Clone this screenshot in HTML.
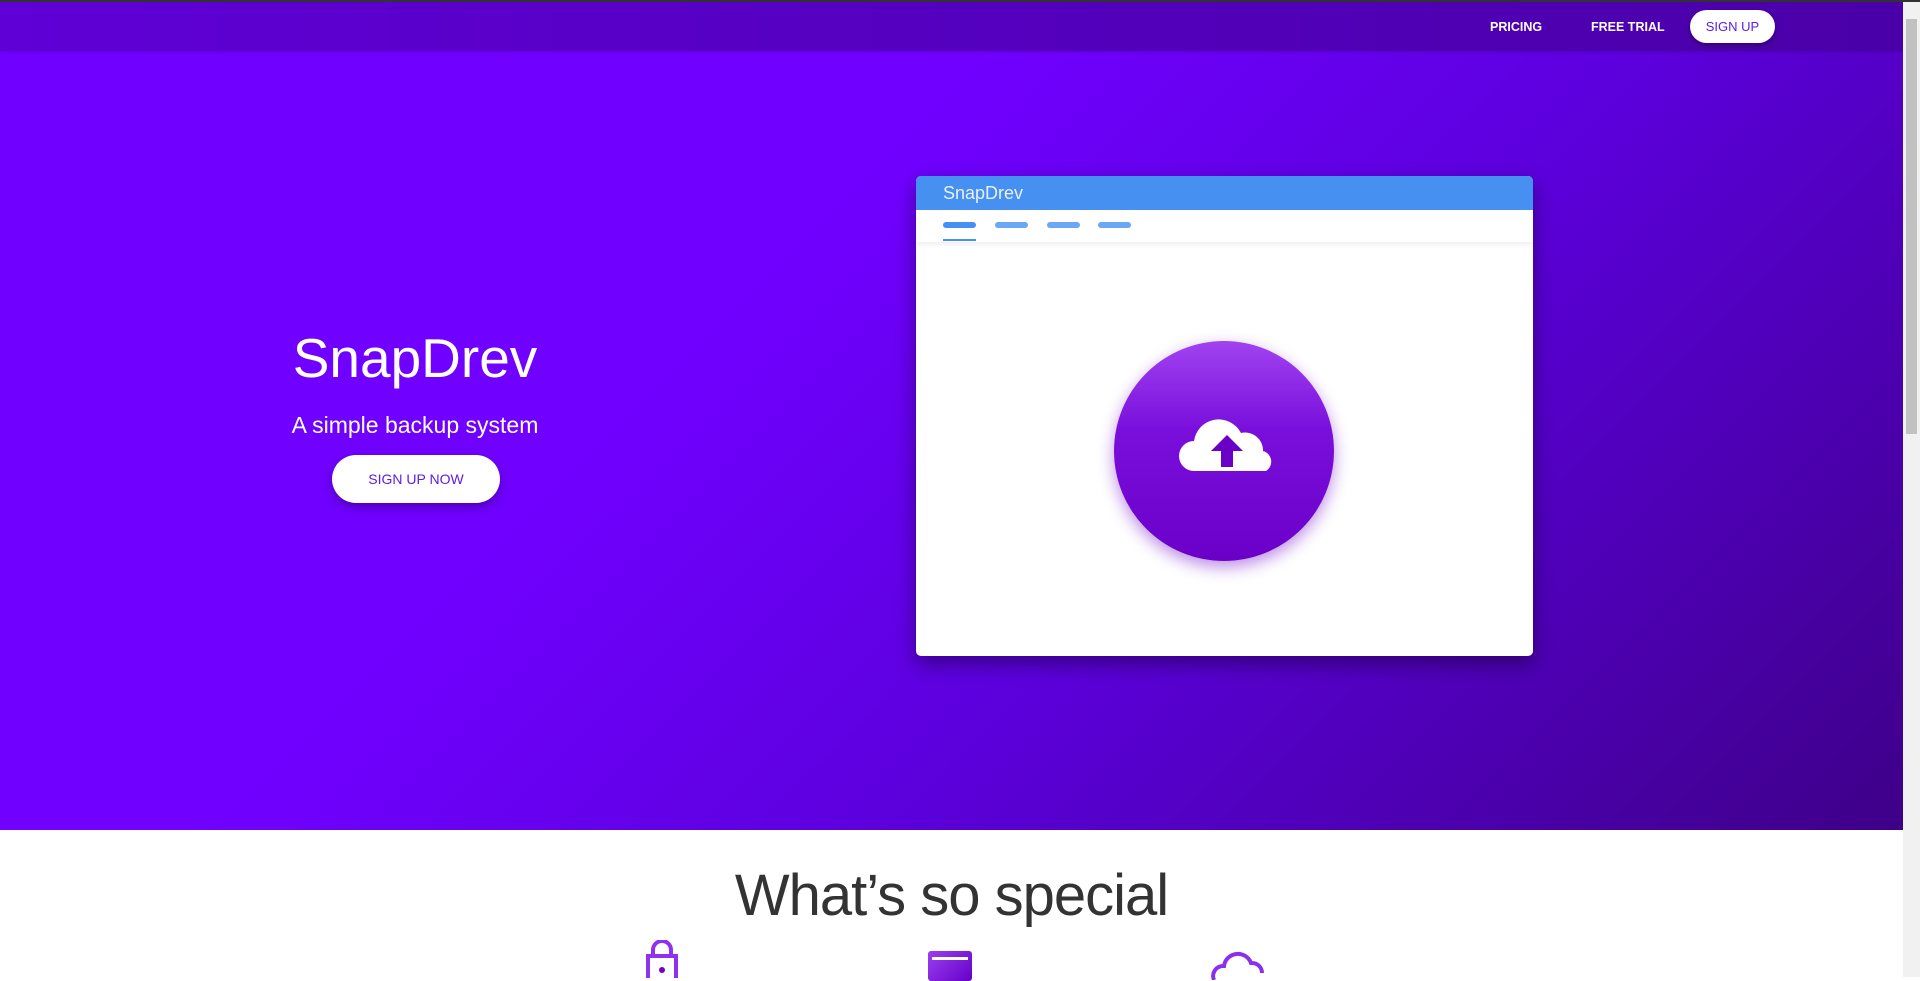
<!DOCTYPE html>
<html><head><style>
*{margin:0;padding:0;box-sizing:border-box}
body{width:1920px;height:977px;overflow:hidden;font-family:"Liberation Sans",sans-serif;background:#fff;position:relative}
.hero{position:absolute;left:0;top:0;width:1903px;height:830px;background:linear-gradient(135deg,#7000ff 0%,#7000ff 38%,#5c00dd 62%,#3e0088 100%)}
.topline{position:absolute;left:0;top:0;width:1920px;height:2px;background:#333}
.nav{position:absolute;left:0;top:2px;width:1903px;height:49px;background:linear-gradient(90deg,#5f00d6,#4a00a8);box-shadow:0 1px 3px rgba(0,0,0,.15)}
.nav a{position:absolute;top:18px;color:#fff;font-weight:bold;font-size:12.5px}
.su{position:absolute;left:1690px;top:10px;width:85px;height:33px;border-radius:17px;background:#fff;color:#5a1ee6;font-size:13px;text-align:center;line-height:33px;box-shadow:0 3px 6px rgba(0,0,0,.3)}
.title{position:absolute;left:215px;width:400px;text-align:center;top:326px;color:#fff;font-size:55px;font-weight:300}
.sub{position:absolute;left:215px;width:400px;text-align:center;top:412px;color:#fff;font-size:23px}
.btn{position:absolute;left:332px;top:455px;width:168px;height:48px;border-radius:24px;background:#fff;color:#5a1ee6;font-size:14px;text-align:center;line-height:48px;box-shadow:0 4px 10px rgba(0,0,0,.3)}
.card{position:absolute;left:916px;top:176px;width:617px;height:480px;background:#fff;border-radius:5px;overflow:hidden;box-shadow:0 8px 20px rgba(0,0,0,.4)}
.ch{height:34px;background:#4590f0;color:#e8f0ff;font-size:18px;font-weight:300;padding:7px 0 0 27px}
.tabs{height:32px;position:relative;box-shadow:0 3px 4px rgba(0,0,0,.06)}
.tabs i{position:absolute;top:12px;width:33px;height:6px;border-radius:3px;background:#6aa8f5}
.circ{position:absolute;left:198px;top:165px;width:220px;height:220px;border-radius:50%;background:linear-gradient(180deg,#a043f0 0%,#7a0fdc 40%,#6a00c8 100%);box-shadow:0 6px 16px rgba(106,0,200,.45)}
.sb{position:absolute;left:1903px;top:2px;width:17px;height:975px;background:#f1f1f1}
.sb div{position:absolute;left:3px;top:17px;width:11px;height:415px;background:#c1c1c1}
h2{position:absolute;left:0;width:1903px;text-align:center;top:862px;font-size:58px;font-weight:300;color:#333;letter-spacing:-1px}
</style></head><body>
<div class="hero"></div>
<div class="topline"></div>
<div class="nav">
<a style="left:1490px">PRICING</a><a style="left:1591px">FREE TRIAL</a>
<div class="su" style="top:8px">SIGN UP</div>
</div>
<div class="title">SnapDrev</div>
<div class="sub">A simple backup system</div>
<div class="btn">SIGN UP NOW</div>
<div class="card">
<div class="ch">SnapDrev</div>
<div class="tabs"><i style="left:27px;background:#4590f0"></i><i style="left:79px"></i><i style="left:131px"></i><i style="left:182px"></i><b style="position:absolute;left:27px;top:29px;width:33px;height:2px;background:#4590f0"></b></div>
<div class="circ"><svg width="220" height="220" viewBox="0 0 220 220"><path d="M80 130a15 15 0 0 1 0-30a25 25 0 0 1 47-8a18 18 0 0 1 22 18a11 11 0 0 1 3 20z" fill="#fff"/><path d="M113 94l-16 16h10v16h12v-16h10z" fill="#6a00c8"/></svg></div>
</div>
<h2>What’s so special</h2>
<svg style="position:absolute;left:640px;top:940px" width="44" height="40"><path d="M8 38V16h28v22M13 16V10a9 9 0 0 1 18 0v6" fill="none" stroke="#9030f0" stroke-width="4"/><circle cx="22" cy="30" r="3" fill="#7000d0"/></svg>
<div style="position:absolute;left:928px;top:951px;width:44px;height:30px;border-radius:3px;background:linear-gradient(135deg,#9a40f0,#6600c8)"><div style="margin:6px 4px;height:3px;background:#fff"></div></div>
<svg style="position:absolute;left:1210px;top:950px" width="56" height="30"><path d="M4 30a10 10 0 0 1 10-14a14 14 0 0 1 27-3a10 10 0 0 1 11 10" fill="none" stroke="#8a30ec" stroke-width="4"/></svg>
<div class="sb"><div></div></div>
</body></html>
